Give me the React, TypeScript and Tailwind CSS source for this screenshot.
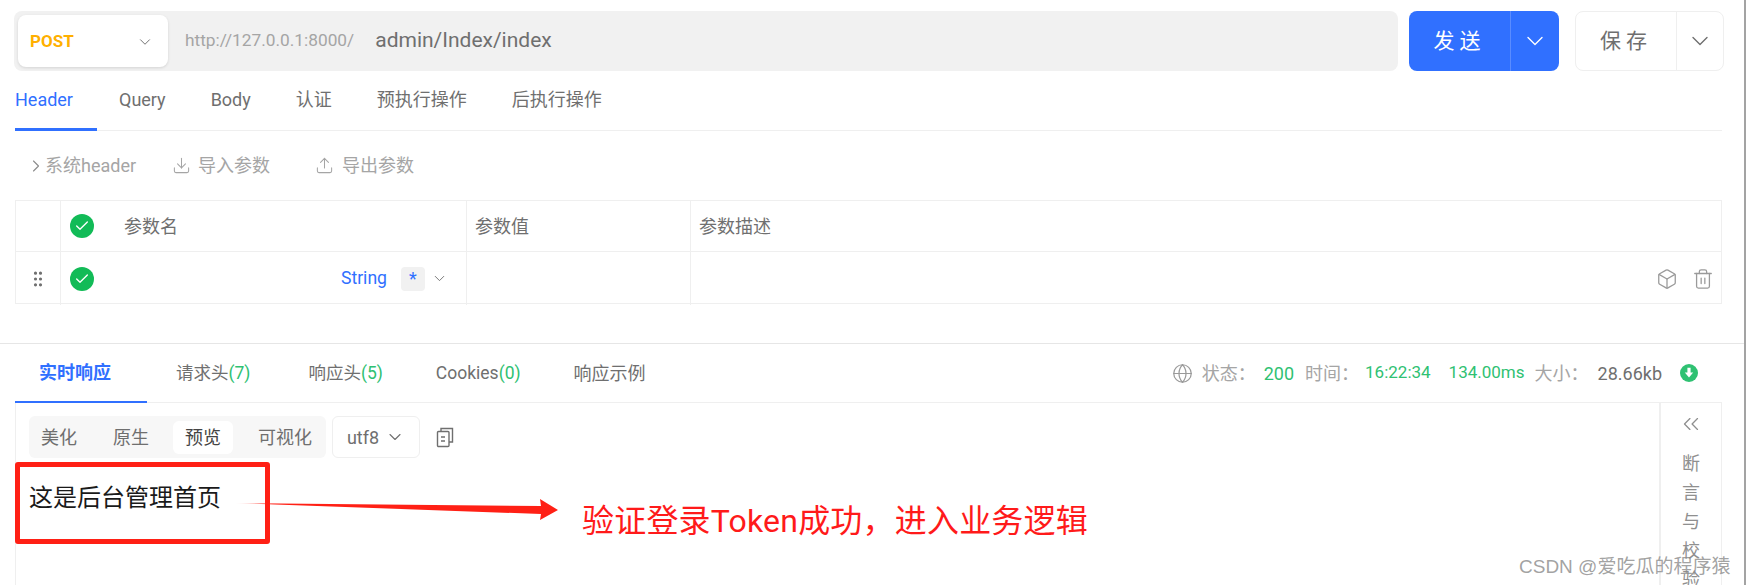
import React from 'react';
import { Box, Check, ChevronDown, ChevronRight, ChevronsLeft, Download, Globe, GripVertical, Trash2, Upload } from 'lucide-react';

const requestTabs = ['Query', 'Body', '认证', '预执行操作', '后执行操作'];

const CheckDot: React.FC = () => (
  <span className="flex h-6 w-6 items-center justify-center rounded-full bg-[#12bb57]">
    <Check size={16} strokeWidth={2} className="text-white" />
  </span>
);

const Green: React.FC<{ children: React.ReactNode }> = ({ children }) => (
  <span className="text-[#2fc172]">{children}</span>
);

const formatTabs = [
  { label: '美化', width: 'w-[60px]', active: false },
  { label: '原生', width: 'w-[84px]', active: false },
  { label: '预览', width: 'w-[60px]', active: true },
  { label: '可视化', width: 'ml-[11px] w-[82px]', active: false },
];

export default function App() {
  return (
    <div className="relative h-[585px] w-full overflow-hidden border-r-2 border-[#a3a3a3] bg-white font-['Roboto','Noto_Sans_CJK_SC',sans-serif] text-[18px] text-[#6f6f6f]">
      {/* Address bar */}
      <div className="flex gap-[11px] pl-[14px] pr-[20px] pt-[11px]">
        <div className="flex h-[60px] flex-1 items-center rounded-lg bg-[#f1f1f1] pl-1">
          <div className="flex h-[52px] w-[150px] items-center justify-between rounded-lg bg-white pl-3 pr-[14px] pt-[2px] shadow-[0_1px_3px_rgba(0,0,0,0.12)]">
            <span className="text-[17px] font-bold text-[#ffb000]">POST</span>
            <ChevronDown size={18} strokeWidth={1.3} />
          </div>
          <span className="ml-[17px] text-[17.3px] text-[#a5a5a5]">http://127.0.0.1:8000/</span>
          <span className="ml-[21px] text-[21px]">admin/Index/index</span>
        </div>
        <div className="flex h-[60px] w-[150px] rounded-lg bg-[#3070ff] text-white">
          <div className="flex w-[102px] items-center justify-center border-r border-[#5a8cff] pt-[2px] text-[21px] tracking-[5px]">发送</div>
          <div className="flex flex-1 items-center justify-center">
            <ChevronDown size={28} strokeWidth={1.2} />
          </div>
        </div>
        <div className="ml-[5px] flex h-[60px] w-[149px] rounded-lg border border-[#efefef]">
          <div className="flex w-[101px] items-center justify-center border-r border-[#efefef] pt-[2px] text-[21px] tracking-[5px]">保存</div>
          <div className="flex flex-1 items-center justify-center">
            <ChevronDown size={28} strokeWidth={1.2} />
          </div>
        </div>
      </div>

      <div className="ml-[15px] mr-[22px]">
        {/* Request tabs */}
        <div className="flex h-[60px] gap-[45px] border-b border-[#efefef]">
          <div className="mr-[-23px] flex h-[60px] w-[82px] items-center border-b-[3px] border-[#3070ff] pb-[1px] text-[#3070ff]">Header</div>
          {requestTabs.map((tab) => (
            <div key={tab} className="flex h-[56px] items-center">{tab}</div>
          ))}
        </div>

        {/* Params toolbar */}
        <div className="flex h-[69px] items-center text-[#a5a5a5]">
          <ChevronRight size={20} strokeWidth={1.3} className="ml-[11px] text-[#8b8b8b]" />
          <span className="ml-[-1px]">系统header</span>
          <Download size={19} strokeWidth={1.3} className="ml-[36px]" />
          <span className="ml-[7px]">导入参数</span>
          <Upload size={19} strokeWidth={1.3} className="ml-[45px]" />
          <span className="ml-[8px]">导出参数</span>
        </div>

        {/* Params table */}
        <div className="grid h-[104px] grid-cols-[45px_406px_224px_1fr] grid-rows-[51px_53px] border border-[#efefef]">
          <div className="border-b border-r border-[#efefef]" />
          <div className="flex items-center border-b border-r border-[#efefef] pl-[9px]">
            <CheckDot />
            <span className="ml-[30px]">参数名</span>
          </div>
          <div className="flex items-center border-b border-r border-[#efefef] pl-2">参数值</div>
          <div className="flex items-center border-b border-[#efefef] pl-2">参数描述</div>
          <div className="flex items-center justify-center border-r border-[#efefef]">
            <GripVertical size={20} strokeWidth={1.8} className="text-[#6f6f6f]" />
          </div>
          <div className="flex items-center border-r border-[#efefef] pl-[9px]">
            <CheckDot />
            <span className="ml-auto text-[17.6px] text-[#3070ff]">String</span>
            <span className="ml-[14px] flex h-6 w-6 items-center justify-center rounded bg-[#f1f1f1] text-[#3070ff]">*</span>
            <ChevronDown size={17} strokeWidth={1.3} className="ml-[6px] mr-[18px]" />
          </div>
          <div className="border-r border-[#efefef]" />
          <div className="flex items-center justify-end gap-[14px] pr-[7px] text-[#9a9a9a]">
            <Box size={22} strokeWidth={1.4} />
            <Trash2 size={22} strokeWidth={1.4} />
          </div>
        </div>
      </div>

      {/* Response tabs */}
      <div className="mt-[39px] border-t border-[#e6e6e6]">
        <div className="ml-[15px] mr-[22px] flex h-[59px] border-b border-[#efefef]">
          <div className="flex h-[59px] w-[132px] items-center border-b-[2px] border-[#3070ff] pl-[24px] font-bold text-[#3070ff]">实时响应</div>
          <div className="ml-[29px] flex items-center text-[17.5px]">
            <span>请求头<Green>(7)</Green></span>
            <span className="ml-[58px]">响应头<Green>(5)</Green></span>
            <span className="ml-[53px]">Cookies<Green>(0)</Green></span>
            <span className="ml-[53px] text-[18px]">响应示例</span>
          </div>
          <div className="ml-auto flex items-center text-[#a5a5a5]">
            <Globe size={21} strokeWidth={1.4} className="text-[#9a9a9a]" />
            <span className="ml-[9px] w-[62px]">状态：</span>
            <Green>200</Green>
            <span className="ml-[11px] w-[60px]">时间：</span>
            <span className="text-[17px]"><Green>16:22:34</Green></span>
            <span className="ml-[18px] text-[17px]"><Green>134.00ms</Green></span>
            <span className="ml-[10px] w-[63px]">大小：</span>
            <span className="text-[#6f6f6f]">28.66kb</span>
            <svg viewBox="0 0 18 18" className="ml-[18px] mr-[24px] h-[18px] w-[18px]">
              <circle cx="9" cy="9" r="9" fill="#2fc172" />
              <path d="M7.4 3.8h3.2v4.6h2.6L9 13.6 4.8 8.4h2.6z" fill="#fff" />
            </svg>
          </div>
        </div>

        {/* Response body */}
        <div className="ml-[15px] mr-[22px] flex h-[182px] border-l border-[#efefef]">
          <div className="flex-1 pl-[13px] pt-[13px]">
            <div className="flex items-center">
              <div className="flex h-[42px] w-[297px] items-center rounded-md bg-[#f7f7f7]">
                {formatTabs.map((tab) => (
                  <span
                    key={tab.label}
                    className={`flex h-[33px] items-center justify-center rounded-md ${tab.width} ${
                      tab.active ? 'bg-white text-[#444444]' : ''
                    }`}
                  >
                    {tab.label}
                  </span>
                ))}
              </div>
              <div className="ml-[6px] flex h-[42px] w-[88px] items-center justify-center gap-[6px] rounded-md border border-[#efefef]">
                <span>utf8</span>
                <ChevronDown size={20} strokeWidth={1.3} />
              </div>
              <svg viewBox="0 0 18 21" fill="none" stroke="#6f6f6f" strokeWidth="1.4" className="ml-[16px] h-[21px] w-[18px]">
                <path d="M5 4V1.5h11.5V15H13" />
                <rect x="1.5" y="4.5" width="11.5" height="15" rx="1" />
                <path d="M5 10h4M5 14h4" />
              </svg>
            </div>
            <div className="mt-[25px] text-[24px] leading-[30px] text-[#1a1a1a]">这是后台管理首页</div>
          </div>
          <div className="flex w-[63px] flex-col items-center overflow-hidden border-l-2 border-r border-[#efefef] pt-[8px] text-[#8f8f8f]">
            <ChevronsLeft size={26} strokeWidth={1.2} className="shrink-0" />
            <div className="mt-[12px] flex shrink-0 flex-col items-center leading-[29px]">
              <span>断</span>
              <span>言</span>
              <span>与</span>
              <span>校</span>
              <span>验</span>
            </div>
          </div>
        </div>
      </div>

      {/* Annotations drawn over the screenshot */}
      <div className="absolute left-[15px] top-[462px] h-[82px] w-[255px] rounded-[3px] border-[5px] border-[#ff2015]" />
      <svg className="absolute left-[230px] top-[495px] h-[30px] w-[332px]" viewBox="230 495 332 30">
        <defs>
          <linearGradient id="tail" x1="0" x2="1" y1="0" y2="0">
            <stop offset="0" stopColor="#ff2015" stopOpacity="0" />
            <stop offset="0.12" stopColor="#ff2015" />
          </linearGradient>
        </defs>
        <path d="M234 503 L541 506 L540 499 L558 510 L540 520 L541 514 Z" fill="url(#tail)" />
      </svg>
      <div className="absolute left-[582px] top-[499px] whitespace-nowrap text-[32px] leading-[44px] tracking-[0.2px] text-[#ff1a1a]">
        验证登录Token成功，进入业务逻辑
      </div>
      <div className="absolute left-[1519px] top-[553px] whitespace-nowrap font-['Liberation_Sans','Noto_Sans_CJK_SC',sans-serif] text-[19px] leading-[28px] text-[#8a8a8a]/80">
        CSDN @爱吃瓜的程序猿
      </div>
    </div>
  );
}
